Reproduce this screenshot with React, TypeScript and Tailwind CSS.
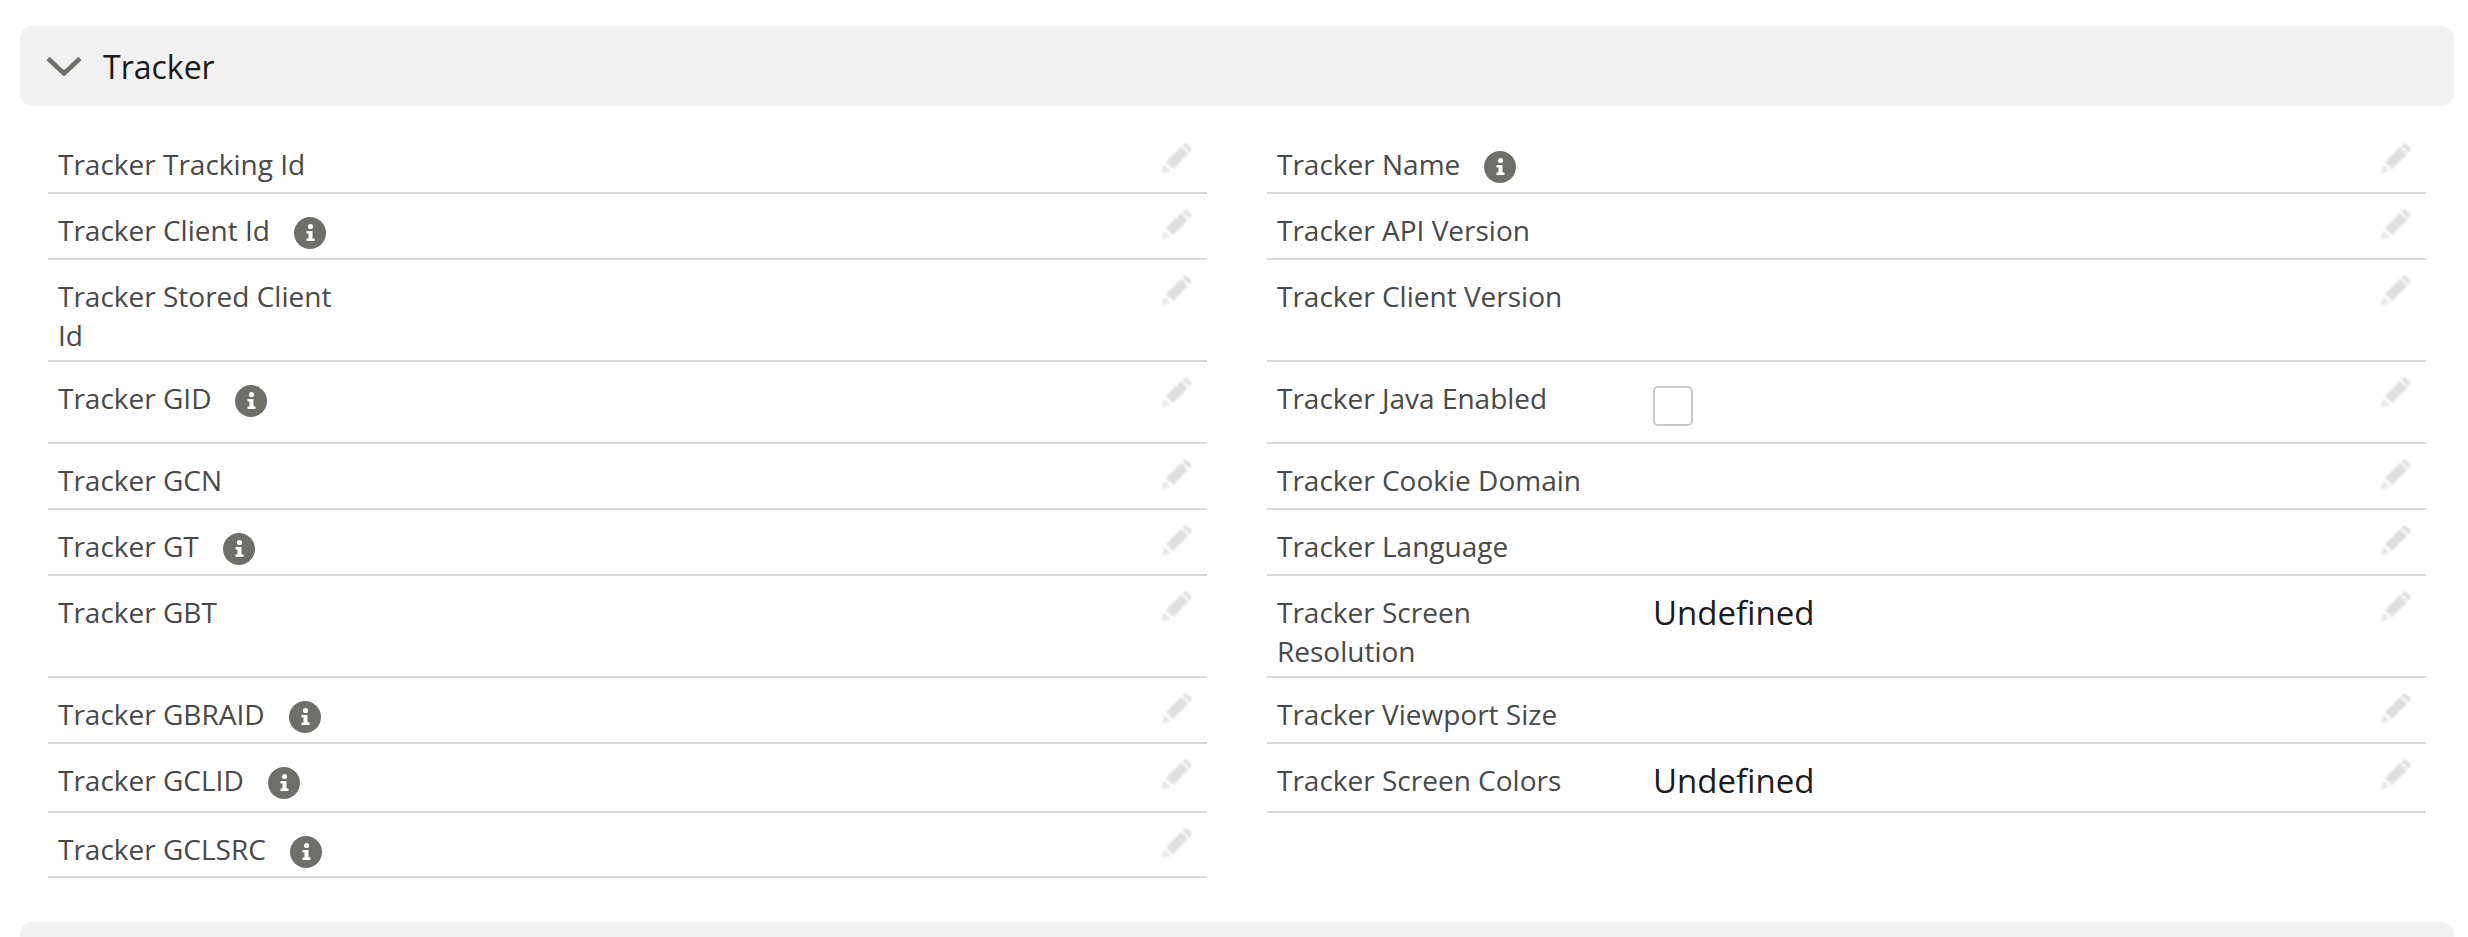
const fontStack = "font-['Open_Sans',sans-serif]";

type Field = {
  label: string;
  info?: boolean;
  value?: string;
  checkbox?: boolean;
  height: string;
};

const leftFields: Field[] = [
  { label: 'Tracker Tracking Id', height: 'h-[66px]' },
  { label: 'Tracker Client Id', info: true, height: 'h-[66px]' },
  { label: 'Tracker Stored Client\nId', height: 'h-[102px]' },
  { label: 'Tracker GID', info: true, height: 'h-[82px]' },
  { label: 'Tracker GCN', height: 'h-[66px]' },
  { label: 'Tracker GT', info: true, height: 'h-[66px]' },
  { label: 'Tracker GBT', height: 'h-[102px]' },
  { label: 'Tracker GBRAID', info: true, height: 'h-[66px]' },
  { label: 'Tracker GCLID', info: true, height: 'h-[69px]' },
  { label: 'Tracker GCLSRC', info: true, height: 'h-[65px]' },
];

const rightFields: Field[] = [
  { label: 'Tracker Name', info: true, height: 'h-[66px]' },
  { label: 'Tracker API Version', height: 'h-[66px]' },
  { label: 'Tracker Client Version', height: 'h-[102px]' },
  { label: 'Tracker Java Enabled', checkbox: true, height: 'h-[82px]' },
  { label: 'Tracker Cookie Domain', height: 'h-[66px]' },
  { label: 'Tracker Language', height: 'h-[66px]' },
  { label: 'Tracker Screen\nResolution', value: 'Undefined', height: 'h-[102px]' },
  { label: 'Tracker Viewport Size', height: 'h-[66px]' },
  { label: 'Tracker Screen Colors', value: 'Undefined', height: 'h-[69px]' },
];

function InfoIcon() {
  return (
    <svg viewBox="0 0 32 32" className="ml-[24px] inline-block h-[32px] w-[32px] align-[-8px]">
      <circle cx="16" cy="16" r="16" fill="#6f6e69" />
      <circle cx="16.5" cy="9.5" r="2.6" fill="#fff" />
      <path d="M12.5 14h6v7.5h2V24h-8v-2.5h2V16.500h-2z" fill="#fff" />
    </svg>
  );
}

function PencilIcon() {
  return (
    <svg viewBox="0 0 32 32" className="h-[32px] w-[32px] shrink-0 blur-[0.8px]">
      <path d="M0.500 31.500l2.500-9 6.500 6.500z" fill="#e6e6e6" />
      <path d="M5 20L20 5l7 7-15 15z" fill="#dedede" />
      <path d="M22.500 2.500a3 3 0 0 1 4.200 0l2.800 2.800a3 3 0 0 1 0 4.200l-1 1-7-7z" fill="#dedede" />
    </svg>
  );
}

function FieldRow({ field }: { field: Field }) {
  return (
    <div className={`flex border-b-2 border-[#d9d9d9] pr-[14px] ${field.height}`}>
      <div className="w-[386px] shrink-0 pl-[10px] pt-[17px]">
        <div className="whitespace-pre-line text-[28px] leading-[39px] text-[#484848]">
          {field.label}
          {field.info && <InfoIcon />}
        </div>
      </div>
      <div className="min-w-0 flex-1">
        {field.checkbox && (
          <div className="mt-[24px] h-[40px] w-[40px] rounded-[5px] border-2 border-[#c9c9c9] bg-white" />
        )}
        {field.value && <div className="pt-[17px] text-[33px] leading-[39px] text-[#1c1c1c]">{field.value}</div>}
      </div>
      <div className="pt-[14px]">
        <PencilIcon />
      </div>
    </div>
  );
}

function SectionHeader({ title }: { title?: string }) {
  return (
    <div className="flex h-[80px] items-center rounded-[12px] bg-[#f1f1f1] pl-[26px]">
      {title && (
        <>
          <svg viewBox="0 0 36 20" className="h-[20px] w-[36px]" fill="none">
            <path d="M2 2.500l16 15 16-15" stroke="#6f6e69" strokeWidth="4.500" />
          </svg>
          <span className="ml-[21px] pt-[2px] text-[32px] text-[#1a1a1a]">{title}</span>
        </>
      )}
    </div>
  );
}

export default function App() {
  return (
    <div className={`h-[937px] overflow-hidden bg-white px-[20px] pt-[26px] ${fontStack}`}>
      <div className="w-[2434px]">
        <SectionHeader title="Tracker" />
        <div className="mt-[22px] flex gap-[60px] px-[28px]">
          <div className="w-[1160px]">
            {leftFields.map((f) => (
              <FieldRow key={f.label} field={f} />
            ))}
          </div>
          <div className="w-[1160px]">
            {rightFields.map((f) => (
              <FieldRow key={f.label} field={f} />
            ))}
          </div>
        </div>
        <div className="mt-[44px]">
          <SectionHeader />
        </div>
      </div>
    </div>
  );
}
